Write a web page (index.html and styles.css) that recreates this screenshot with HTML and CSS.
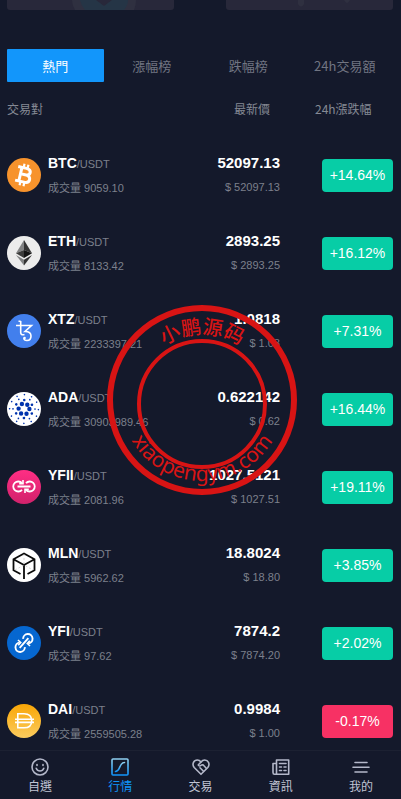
FILE: index.html
```
<!DOCTYPE html>
<html lang="zh-Hant">

<head>
    <meta charset="UTF-8">
    <meta name="viewport" content="width=device-width, initial-scale=1.0">
    <title>行情</title>
    <link rel="stylesheet" href="styles.css">
</head>

<body>
    <main class="page">
        <div class="cards">
            <div class="card">
                <svg width="167" height="10" viewBox="0 0 167 10">
                    <path d="M65 0Q65 5 68 10H127Q129 5 129 0Z" fill="#2f3040" />
                    <path d="M73 0Q74 5 78 10H117Q121 5 121 0Z" fill="#253546" />
                    <path d="M89 0L97 6L105 0Z" fill="#28283a" />
                </svg>
            </div>
            <div class="card">
                <svg width="167" height="10" viewBox="0 0 167 10">
                    <path d="M72 0V4Q75 9 78 4V0Z" fill="#2f3040" />
                    <path d="M118 0Q121 6 124 0Z" fill="#2f3040" />
                </svg>
            </div>
        </div>

        <div class="tabs">
            <button class="tab active">熱門</button>
            <button class="tab">漲幅榜</button>
            <button class="tab">跌幅榜</button>
            <button class="tab">24h交易額</button>
        </div>

        <table class="market">
            <thead>
                <tr>
                    <th class="pair-col">交易對</th>
                    <th class="price-col">最新價</th>
                    <th class="change-col">24h漲跌幅</th>
                </tr>
            </thead>
            <tbody>
                <tr>
                    <td>
                        <div class="pair">
                            <svg class="coin" viewBox="0 0 34 34">
                                <circle cx="17" cy="17" r="17" fill="#f7932c" />
                                <g transform="rotate(13 17 17)" fill="none" stroke="#fff" stroke-width="3">
                                    <path d="M9.5 10H18Q22.5 10.3 22.5 13.3Q22.5 16.5 18 16.5H14H18.5Q23.5 16.8 23.5 20.3Q23.5 24 18.5 24H9.5M13.3 10V24" />
                                    <path d="M15 6V10M19 6V10M15 24V28M19 24V28" stroke-width="2.2" />
                                </g>
                            </svg>
                            <div>
                                <div class="name"><b>BTC</b>/USDT</div>
                                <div class="sub">成交量 9059.10</div>
                            </div>
                        </div>
                    </td>
                    <td class="price"><b>52097.13</b><div class="sub">$ 52097.13</div></td>
                    <td class="change"><span class="badge">+14.64%</span></td>
                </tr>
                <tr>
                    <td>
                        <div class="pair">
                            <svg class="coin" viewBox="0 0 34 34">
                                <circle cx="17" cy="17" r="17" fill="#ececec" />
                                <path d="M17 4L9 17.3L17 14Z" fill="#828384" />
                                <path d="M17 4V14L25 17.3Z" fill="#343434" />
                                <path d="M9 17.3L17 14V22Z" fill="#3c3c3b" />
                                <path d="M25 17.3L17 14V22Z" fill="#141414" />
                                <path d="M9 19L17 23.7V29.5Z" fill="#828384" />
                                <path d="M25 19L17 23.7V29.5Z" fill="#343434" />
                            </svg>
                            <div>
                                <div class="name"><b>ETH</b>/USDT</div>
                                <div class="sub">成交量 8133.42</div>
                            </div>
                        </div>
                    </td>
                    <td class="price"><b>2893.25</b><div class="sub">$ 2893.25</div></td>
                    <td class="change"><span class="badge">+16.12%</span></td>
                </tr>
                <tr>
                    <td>
                        <div class="pair">
                            <svg class="coin" viewBox="0 0 34 34">
                                <circle cx="17" cy="17" r="17" fill="#427fed" />
                                <path d="M9 11.5H24.5L18 17.5Q24 17.5 24 22Q24 26.5 20 26.5Q17 26.5 16.8 24.2M13.7 7V18.5Q13.7 21.5 17.5 20.5M11.5 7.2H13.7" fill="none" stroke="#fff" stroke-width="1.6" />
                                <circle cx="17.5" cy="24" r="1.3" fill="#fff" />
                            </svg>
                            <div>
                                <div class="name"><b>XTZ</b>/USDT</div>
                                <div class="sub">成交量 2233397.21</div>
                            </div>
                        </div>
                    </td>
                    <td class="price"><b>1.0818</b><div class="sub">$ 1.08</div></td>
                    <td class="change"><span class="badge">+7.31%</span></td>
                </tr>
                <tr>
                    <td>
                        <div class="pair">
                            <svg class="coin" viewBox="0 0 34 34">
                                <circle cx="17" cy="17" r="17" fill="#fff" />
                                <g fill="none" stroke="#0033ad" stroke-linecap="round">
                                    <circle cx="17" cy="17" r="5.4" stroke-width="4.4" stroke-dasharray="0 5.655" />
                                    <circle cx="17" cy="17" r="9" stroke-width="2.6" stroke-dasharray="0 9.425" transform="rotate(30 17 17)" />
                                    <circle cx="17" cy="17" r="11" stroke-width="1.7" stroke-dasharray="0 11.519" />
                                    <circle cx="17" cy="17" r="14.4" stroke-width="1.6" stroke-dasharray="0 7.54" transform="rotate(30 17 17)" />
                                </g>
                            </svg>
                            <div>
                                <div class="name"><b>ADA</b>/USDT</div>
                                <div class="sub">成交量 30903989.46</div>
                            </div>
                        </div>
                    </td>
                    <td class="price"><b>0.622142</b><div class="sub">$ 0.62</div></td>
                    <td class="change"><span class="badge">+16.44%</span></td>
                </tr>
                <tr>
                    <td>
                        <div class="pair">
                            <svg class="coin" viewBox="0 0 34 34">
                                <defs>
                                    <linearGradient id="pink" x1="0" y1="0" x2="0" y2="1">
                                        <stop offset="0" stop-color="#ff2e84" />
                                        <stop offset="1" stop-color="#d1226b" />
                                    </linearGradient>
                                </defs>
                                <circle cx="17" cy="17" r="17" fill="url(#pink)" />
                                <path d="M15 13.2A5 5 0 1 0 15 19.8M10.5 16.5H23.5M19 13.2A5 5 0 1 1 19 19.8" fill="none" stroke="#fff" stroke-width="1.8" />
                                <path d="M12.2 13.8H16V10M21.8 19.4H18V23" fill="none" stroke="#fff" stroke-width="1.6" />
                            </svg>
                            <div>
                                <div class="name"><b>YFII</b>/USDT</div>
                                <div class="sub">成交量 2081.96</div>
                            </div>
                        </div>
                    </td>
                    <td class="price"><b>1027.5121</b><div class="sub">$ 1027.51</div></td>
                    <td class="change"><span class="badge">+19.11%</span></td>
                </tr>
                <tr>
                    <td>
                        <div class="pair">
                            <svg class="coin" viewBox="0 0 34 34">
                                <circle cx="17" cy="17" r="17" fill="#fff" />
                                <path d="M13.5 26L6.5 22.3V11.2L17 5.5L27.5 11.2V22.3L20.5 26M6.5 11.2L17 17L27.5 11.2M17 17V31" fill="none" stroke="#0b0b0b" stroke-width="1.8" />
                                <path d="M17 6V17M8 22L17 17L26 22" fill="none" stroke="#bbb" stroke-width=".6" stroke-dasharray="2 2" />
                            </svg>
                            <div>
                                <div class="name"><b>MLN</b>/USDT</div>
                                <div class="sub">成交量 5962.62</div>
                            </div>
                        </div>
                    </td>
                    <td class="price"><b>18.8024</b><div class="sub">$ 18.80</div></td>
                    <td class="change"><span class="badge">+3.85%</span></td>
                </tr>
                <tr>
                    <td>
                        <div class="pair">
                            <svg class="coin" viewBox="0 0 34 34">
                                <circle cx="17" cy="17" r="17" fill="#0667d0" />
                                <g transform="rotate(-48 17 17)" fill="none" stroke="#fff" stroke-width="1.9">
                                    <path d="M14.5 13.6A4.7 4.7 0 1 0 14.5 20.4M10.5 17H23.5M19.5 13.6A4.7 4.7 0 1 1 19.5 20.4" />
                                    <path d="M11.5 14.2H15.2V10.5M22.5 19.8H18.8V23.5" stroke-width="1.6" />
                                </g>
                            </svg>
                            <div>
                                <div class="name"><b>YFI</b>/USDT</div>
                                <div class="sub">成交量 97.62</div>
                            </div>
                        </div>
                    </td>
                    <td class="price"><b>7874.2</b><div class="sub">$ 7874.20</div></td>
                    <td class="change"><span class="badge">+2.02%</span></td>
                </tr>
                <tr>
                    <td>
                        <div class="pair">
                            <svg class="coin" viewBox="0 0 34 34">
                                <defs>
                                    <linearGradient id="gold" x1="0" y1="0" x2="0" y2="1">
                                        <stop offset="0" stop-color="#f9a606" />
                                        <stop offset="1" stop-color="#fbcc5f" />
                                    </linearGradient>
                                </defs>
                                <circle cx="17" cy="17" r="17" fill="url(#gold)" />
                                <path d="M10.8 9.7H17Q24.7 9.7 24.7 16.7Q24.7 23.8 17 23.8H10.8ZM8 15.2H27M8 18.4H27" fill="none" stroke="#fff" stroke-width="1.6" />
                            </svg>
                            <div>
                                <div class="name"><b>DAI</b>/USDT</div>
                                <div class="sub">成交量 2559505.28</div>
                            </div>
                        </div>
                    </td>
                    <td class="price"><b>0.9984</b><div class="sub">$ 1.00</div></td>
                    <td class="change"><span class="badge down">-0.17%</span></td>
                </tr>
            </tbody>
        </table>
    </main>

    <!-- seal over the list -->
    <svg class="seal" viewBox="0 0 192 192">
        <defs>
            <path id="arc-top" d="M30 96A66 66 0 0 1 162 96" />
            <path id="arc-bottom" d="M14 95A82 82 0 0 0 178 95" />
        </defs>
        <circle cx="96" cy="96" r="92" fill="none" stroke="#d81414" stroke-width="6" />
        <circle cx="96" cy="100" r="63" fill="none" stroke="#d81414" stroke-width="4" />
        <text class="seal-cn"><textPath href="#arc-top" startOffset="50%">小鹏源码</textPath></text>
        <text class="seal-url"><textPath href="#arc-bottom" startOffset="50%">xiaopengym.com</textPath></text>
    </svg>

    <nav class="tabbar">
        <a href="#">
            <svg viewBox="0 0 18 18">
                <circle cx="9" cy="9" r="8" />
                <path d="M5.2 10.3Q6.3 13 9 13T12.8 10.3M6 6.5V7.5M12 6.5V7.5" />
            </svg>
            自選
        </a>
        <a href="#" class="current">
            <svg viewBox="0 0 18 18">
                <defs>
                    <linearGradient id="blue" x1="0" y1="0" x2="0" y2="1">
                        <stop offset="0" stop-color="#8fd0f0" />
                        <stop offset="1" stop-color="#1094fa" />
                    </linearGradient>
                </defs>
                <rect x="1" y="1" width="16" height="16" rx="1" stroke="url(#blue)" />
                <path d="M4.5 13.5C9.5 13.5 8 4.5 13.5 4.5" stroke="url(#blue)" />
            </svg>
            行情
        </a>
        <a href="#">
            <svg viewBox="0 0 18 18">
                <path d="M9 16.3L2.2 9.5C-.5 6 2 2 5.3 2Q7.5 2 9 4Q10.5 2 12.7 2C16 2 18.5 6 15.8 9.5Z" />
                <path d="M9 4L6.2 7Q7.2 9 9.5 7L11 6.8L14.5 10.5M8 9.8L11.5 13.3" />
            </svg>
            交易
        </a>
        <a href="#">
            <svg viewBox="0 0 18 18">
                <path d="M4.5 16.2V2H16.7V16.2H2.5Q1 16.2 1 14.5V5.5H4.5M4.5 16.2H2.5" />
                <path d="M7.5 5.5H14M7.5 9H9.5M12 9H14M7.5 12.5H9.5M12 12.5H14" />
            </svg>
            資訊
        </a>
        <a href="#">
            <svg viewBox="0 0 18 18">
                <path d="M3 4.5H15M1 9.3H17M3 14H15" />
            </svg>
            我的
        </a>
    </nav>
</body>

</html>
```
FILE: styles.css
```
* {
    box-sizing: border-box;
}

body {
    margin: 0;
    height: 100vh;
    display: flex;
    flex-direction: column;
    overflow: hidden;
    background-color: #14192b;
    font-family: "Liberation Sans", "Noto Sans CJK TC", sans-serif;
    color: #7c808c;
}

.page {
    flex: 1;
    min-height: 0;
    overflow: hidden;
    padding: 0 8px 0 7px;
}

.cards {
    display: flex;
    justify-content: space-between;
    gap: 52px;
    margin-bottom: 39px;
}

.card {
    flex: 1;
    height: 10px;
    overflow: hidden;
    background-color: #28283a;
    border-radius: 0 0 3px 3px;
}

.card svg {
    display: block;
    margin: 0 auto;
}

.tabs {
    display: flex;
}

.tab {
    flex: 1;
    height: 33px;
    padding: 0;
    border: none;
    border-radius: 1px;
    background: none;
    color: #717582;
    font-family: "Noto Sans CJK TC", sans-serif;
    font-size: 13px;
    cursor: pointer;
}

.tab.active {
    background-color: #1296fb;
    color: #fff;
}

.market {
    width: 100%;
    border-collapse: collapse;
    table-layout: fixed;
}

.market th {
    height: 54px;
    padding: 0 0 2px;
    font-family: "Noto Sans CJK TC", sans-serif;
    font-size: 12px;
    font-weight: normal;
    text-align: left;
    color: #858994;
}

.market .price-col {
    width: 90px;
    padding-right: 10px;
    text-align: right;
}

.market .change-col {
    width: 113px;
    padding-left: 35px;
}

.market td {
    height: 78px;
    padding: 0;
}

.pair {
    display: flex;
    align-items: center;
    gap: 7px;
}

.coin {
    width: 34px;
    height: 34px;
    flex: none;
}

.name,
.sub {
    font-size: 11px;
    line-height: 24px;
    white-space: nowrap;
}

.name b {
    font-size: 14px;
    color: #fff;
}

.price {
    text-align: right;
}

.price b {
    display: block;
    font-size: 15px;
    line-height: 24px;
    color: #fff;
}

.change {
    text-align: right;
}

.badge {
    display: inline-block;
    width: 71px;
    border-radius: 4px;
    background-color: #07cda6;
    color: #fff;
    font-size: 14px;
    line-height: 33px;
    text-align: center;
    vertical-align: middle;
}

.badge.down {
    background-color: #f73164;
}

.seal {
    position: absolute;
    top: 304px;
    left: calc(50% + 1px);
    width: 192px;
    height: 192px;
    transform: translateX(-50%);
    pointer-events: none;
}

.seal text {
    fill: #d81414;
    text-anchor: middle;
    font-family: "Noto Sans CJK SC", sans-serif;
}

.seal-cn {
    font-size: 20px;
    font-weight: 500;
}

.seal .seal-url {
    font-family: "Noto Sans", sans-serif;
    font-size: 21px;
}

.tabbar {
    display: flex;
    height: 49px;
    border-top: 1px solid #1c2132;
    background-color: #14192b;
}

.tabbar a {
    flex: 1;
    display: flex;
    flex-direction: column;
    align-items: center;
    padding-top: 7px;
    gap: 2px;
    color: #c0c4d4;
    font-family: "Noto Sans CJK TC", sans-serif;
    font-size: 12px;
    line-height: 16px;
    text-decoration: none;
}

.tabbar .current {
    color: #1094fa;
}

.tabbar svg {
    width: 18px;
    height: 18px;
    fill: none;
    stroke: #b4b8ca;
    stroke-width: 1.6;
    stroke-linecap: round;
    stroke-linejoin: round;
}
```
